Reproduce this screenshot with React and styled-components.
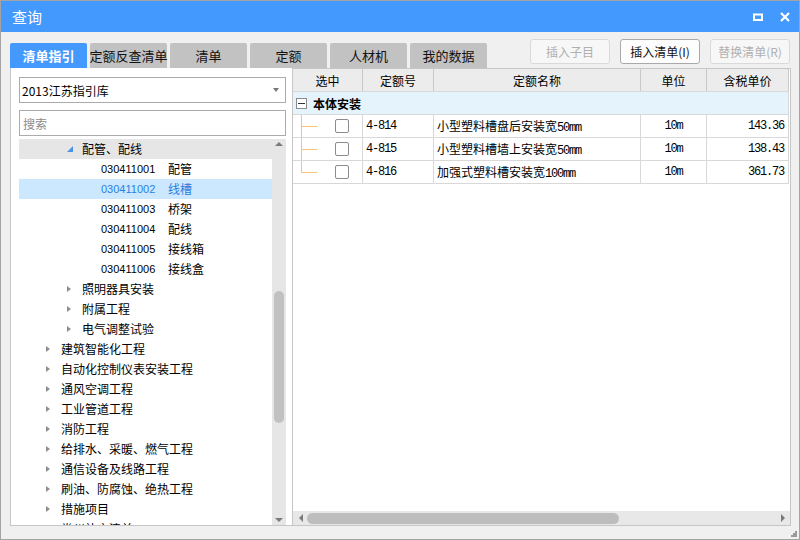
import React from "react";
import styled, { createGlobalStyle } from "styled-components";

const GlobalStyle = createGlobalStyle`
  html, body {
    margin: 0;
    padding: 0;
    background: #ffffff;
  }
  body {
    font-family: "Noto Sans CJK SC", "Liberation Sans", sans-serif;
    font-size: 12px;
    color: #000;
  }
  * {
    box-sizing: border-box;
  }
`;

const Window = styled.div`
  position: relative;
  width: 800px;
  height: 540px;
  background: #f0f0f0;
  border: 1px solid #a4a4a4;
  display: flex;
  flex-direction: column;
  overflow: hidden;
`;

const TitleBar = styled.div`
  height: 31px;
  background: #4499ff;
  display: flex;
  align-items: center;
  padding: 0 9px 0 11px;
  color: #fff;
`;

const Title = styled.span`
  font-size: 15px;
  flex: 1;
`;

const TitleIcons = styled.div`
  display: flex;
  align-items: center;
  gap: 17px;
`;

const Toolbar = styled.div`
  height: 36px;
  display: flex;
  padding: 0 9px 0 9px;
`;

const Tabs = styled.div`
  display: flex;
  align-self: flex-end;
  gap: 3px;
`;

const Tab = styled.div`
  width: 77px;
  height: 25px;
  display: flex;
  align-items: center;
  justify-content: center;
  border-radius: 2px 2px 0 0;
  font-size: 13px;
  background: ${(p) => (p.$active ? "#4499ff" : "#c2c2c2")};
  color: ${(p) => (p.$active ? "#fff" : "#111")};
  font-weight: ${(p) => (p.$active ? 700 : 400)};
  white-space: nowrap;
`;

const Actions = styled.div`
  margin-left: auto;
  margin-top: 7px;
  display: flex;
  gap: 10px;
  align-self: flex-start;
`;

const Button = styled.div`
  width: 80px;
  height: 25px;
  display: flex;
  align-items: center;
  justify-content: center;
  border-radius: 3px;
  font-size: 12px;
  background: ${(p) => (p.$disabled ? "#f7f7f7" : "#fdfdfd")};
  border: 1px solid ${(p) => (p.$disabled ? "#d9d9d9" : "#a9a9a9")};
  color: ${(p) => (p.$disabled ? "#b0b0b0" : "#111")};
`;

const Content = styled.div`
  height: 458px;
  display: flex;
  padding: 0 8px 0 9px;
`;

const LeftPanel = styled.div`
  width: 282px;
  background: #fff;
  border-left: 1px solid #c6c6c6;
  border-bottom: 1px solid #c6c6c6;
  padding: 9px 6px 0 8px;
  display: flex;
  flex-direction: column;
`;

const Select = styled.div`
  height: 26px;
  border: 1px solid #ababab;
  display: flex;
  align-items: center;
  justify-content: space-between;
  padding: 0 6px 0 2px;
  font-size: 12px;
`;

const Caret = styled.span`
  width: 0;
  height: 0;
  border-left: 3.5px solid transparent;
  border-right: 3.5px solid transparent;
  border-top: 4px solid #777;
`;

const Search = styled.input`
  margin-top: 7px;
  height: 26px;
  border: 1px solid #ababab;
  outline: none;
  padding: 0 3px;
  font-family: "Noto Sans CJK SC", "Liberation Sans", sans-serif;
  font-size: 12px;
  &::placeholder {
    color: #8c8c8c;
  }
`;

const Tree = styled.div`
  margin-top: 3px;
  flex: 1;
  display: flex;
  overflow: hidden;
`;

const TreeList = styled.div`
  flex: 1;
  overflow: hidden;
`;

const TreeRow = styled.div`
  height: 20px;
  display: flex;
  align-items: center;
  padding-left: ${(p) => p.$indent}px;
  padding-bottom: 1px;
  white-space: nowrap;
  background: ${(p) => (p.$head ? "#e6e6e6" : p.$selected ? "#cce8ff" : "transparent")};
  color: ${(p) => (p.$selected ? "#2a7fe0" : "#000")};
`;

const Toggle = styled.span`
  width: 15px;
  display: flex;
  align-items: center;
`;

const OpenTri = styled.span`
  width: 0;
  height: 0;
  border-left: 6px solid transparent;
  border-bottom: 6px solid #4a92e8;
`;

const ClosedTri = styled.span`
  width: 0;
  height: 0;
  border-top: 3px solid transparent;
  border-bottom: 3px solid transparent;
  border-left: 4px solid #8e8e8e;
`;

const Code = styled.span`
  width: 67px;
  font-family: "Liberation Sans", sans-serif;
  font-size: 11px;
`;

const VScroll = styled.div`
  width: 14px;
  background: #e6e6e6;
  display: flex;
  flex-direction: column;
  align-items: center;
`;

const ArrowUp = styled.span`
  margin-top: 3px;
  width: 0;
  height: 0;
  border-left: 4px solid transparent;
  border-right: 4px solid transparent;
  border-bottom: 4px solid #7a7a7a;
`;

const ArrowDown = styled.span`
  margin: auto 0 3px;
  width: 0;
  height: 0;
  border-left: 4px solid transparent;
  border-right: 4px solid transparent;
  border-top: 4px solid #7a7a7a;
`;

const VThumb = styled.span`
  margin-top: 145px;
  width: 10px;
  height: 132px;
  border-radius: 5px;
  background: #c1c1c1;
`;

const RightPanel = styled.div`
  width: 499px;
  background: #fff;
  border: 1px solid #c6c6c6;
  display: flex;
  flex-direction: column;
`;

const Row = styled.div`
  display: grid;
  grid-template-columns: 70px 71px 207px 66px 82px;
  width: 496px;
  height: 23px;
  border-bottom: 1px solid #d8d8d8;
  background: ${(p) => (p.$header ? "#ececec" : "#fff")};
`;

const Cell = styled.div`
  position: relative;
  display: flex;
  align-items: center;
  justify-content: ${(p) => p.$align || "flex-start"};
  padding: 0 ${(p) => (p.$align === "flex-end" ? "4px" : "0")} 0 ${(p) => (p.$align ? "0" : "3px")};
  border-right: 1px solid ${(p) => (p.$header ? "#c9c9c9" : "#d8d8d8")};
  font-size: 12px;
  white-space: nowrap;
  overflow: hidden;
`;

const Num = styled.span`
  font-family: "Liberation Mono", monospace;
  font-size: 12px;
  letter-spacing: -1.2px;
`;

const GroupRow = styled.div`
  width: 496px;
  height: 23px;
  display: flex;
  align-items: center;
  gap: 6px;
  padding-left: 3px;
  background: #e5f3fd;
  border-right: 1px solid #d8d8d8;
  border-bottom: 1px solid #d8d8d8;
  font-weight: 700;
  font-size: 12px;
`;

const MinusBox = styled.span`
  width: 11px;
  height: 11px;
  border: 1px solid #8a8a8a;
  background: #fff;
  display: flex;
  align-items: center;
  justify-content: center;
  &::after {
    content: "";
    width: 7px;
    height: 1px;
    background: #333;
  }
`;

const SelectCell = styled(Cell)`
  padding-left: 42px;
  &::before {
    content: "";
    position: absolute;
    left: 8px;
    top: 0;
    width: 1px;
    height: ${(p) => (p.$last ? "12px" : "23px")};
    background: #f7c470;
  }
  &::after {
    content: "";
    position: absolute;
    left: 8px;
    top: 11px;
    width: 16px;
    height: 1px;
    background: #f7c470;
  }
`;

const Check = styled.span`
  width: 14px;
  height: 14px;
  border: 1px solid #8c8c8c;
  border-radius: 2px;
  background: #fff;
`;

const Filler = styled.div`
  flex: 1;
`;

const HScroll = styled.div`
  height: 14px;
  background: #e8e8e8;
  display: flex;
  align-items: center;
  padding: 0 5px 0 6px;
`;

const ArrowLeft = styled.span`
  width: 0;
  height: 0;
  border-top: 4px solid transparent;
  border-bottom: 4px solid transparent;
  border-right: 4px solid #7a7a7a;
`;

const ArrowRight = styled.span`
  margin-left: auto;
  width: 0;
  height: 0;
  border-top: 4px solid transparent;
  border-bottom: 4px solid transparent;
  border-left: 4px solid #7a7a7a;
`;

const HThumb = styled.span`
  margin-left: 4px;
  width: 312px;
  height: 11px;
  border-radius: 6px;
  background: #bdbdbd;
`;

const Grip = styled.svg`
  position: absolute;
  right: 2px;
  bottom: 2px;
`;

const tree = [
  { indent: 48, open: true, label: "配管、配线", head: true },
  { indent: 82, code: "030411001", label: "配管" },
  { indent: 82, code: "030411002", label: "线槽", selected: true },
  { indent: 82, code: "030411003", label: "桥架" },
  { indent: 82, code: "030411004", label: "配线" },
  { indent: 82, code: "030411005", label: "接线箱" },
  { indent: 82, code: "030411006", label: "接线盒" },
  { indent: 48, label: "照明器具安装" },
  { indent: 48, label: "附属工程" },
  { indent: 48, label: "电气调整试验" },
  { indent: 27, label: "建筑智能化工程" },
  { indent: 27, label: "自动化控制仪表安装工程" },
  { indent: 27, label: "通风空调工程" },
  { indent: 27, label: "工业管道工程" },
  { indent: 27, label: "消防工程" },
  { indent: 27, label: "给排水、采暖、燃气工程" },
  { indent: 27, label: "通信设备及线路工程" },
  { indent: 27, label: "刷油、防腐蚀、绝热工程" },
  { indent: 27, label: "措施项目" },
  { indent: 27, label: "常州补充清单" },
];

const rows = [
  { no: "4-814", name: "小型塑料槽盘后安装宽", size: "50mm", unit: "10m", price: "143.36" },
  { no: "4-815", name: "小型塑料槽墙上安装宽", size: "50mm", unit: "10m", price: "138.43" },
  { no: "4-816", name: "加强式塑料槽安装宽", size: "100mm", unit: "10m", price: "361.73" },
];

const tabs = ["清单指引", "定额反查清单", "清单", "定额", "人材机", "我的数据"];

export default function App() {
  return (
    <>
      <GlobalStyle />
      <Window>
        <TitleBar>
          <Title>查询</Title>
          <TitleIcons>
            <svg width="10" height="8" viewBox="0 0 10 8">
              <rect x="1" y="1.5" width="8" height="5.5" fill="none" stroke="#fff" strokeWidth="2" />
            </svg>
            <svg width="10" height="10" viewBox="0 0 10 10">
              <path d="M1 1 L9 9 M9 1 L1 9" stroke="#fff" strokeWidth="2.2" />
            </svg>
          </TitleIcons>
        </TitleBar>

        <Toolbar>
          <Tabs>
            {tabs.map((t, i) => (
              <Tab key={t} $active={i === 0}>
                {t}
              </Tab>
            ))}
          </Tabs>
          <Actions>
            <Button $disabled>插入子目</Button>
            <Button>插入清单(I)</Button>
            <Button $disabled>替换清单(R)</Button>
          </Actions>
        </Toolbar>

        <Content>
          <LeftPanel>
            <Select>
              <span>2013江苏指引库</span>
              <Caret />
            </Select>
            <Search placeholder="搜索" />
            <Tree>
              <TreeList>
                {tree.map((n, i) => (
                  <TreeRow key={i} $indent={n.indent} $head={n.head} $selected={n.selected}>
                    {n.code ? (
                      <>
                        <Code>{n.code}</Code>
                        <span>{n.label}</span>
                      </>
                    ) : (
                      <>
                        <Toggle>{n.open ? <OpenTri /> : <ClosedTri />}</Toggle>
                        <span>{n.label}</span>
                      </>
                    )}
                  </TreeRow>
                ))}
              </TreeList>
              <VScroll>
                <ArrowUp />
                <VThumb />
                <ArrowDown />
              </VScroll>
            </Tree>
          </LeftPanel>

          <RightPanel>
            <Row $header>
              <Cell $header $align="center">选中</Cell>
              <Cell $header $align="center">定额号</Cell>
              <Cell $header $align="center">定额名称</Cell>
              <Cell $header $align="center">单位</Cell>
              <Cell $header $align="center">含税单价</Cell>
            </Row>
            <GroupRow>
              <MinusBox />
              <span>本体安装</span>
            </GroupRow>
            {rows.map((r, i) => (
              <Row key={r.no}>
                <SelectCell $last={i === rows.length - 1}>
                  <Check />
                </SelectCell>
                <Cell>
                  <Num>{r.no}</Num>
                </Cell>
                <Cell>
                  <span>
                    {r.name}
                    <Num>{r.size}</Num>
                  </span>
                </Cell>
                <Cell $align="center">
                  <Num>{r.unit}</Num>
                </Cell>
                <Cell $align="flex-end">
                  <Num>{r.price}</Num>
                </Cell>
              </Row>
            ))}
            <Filler />
            <HScroll>
              <ArrowLeft />
              <HThumb />
              <ArrowRight />
            </HScroll>
          </RightPanel>
        </Content>

        <Grip width="6" height="6" viewBox="0 0 6 6">
          <rect x="4" y="0" width="2" height="2" fill="#9a9a9a" />
          <rect x="2" y="2" width="2" height="2" fill="#9a9a9a" />
          <rect x="4" y="2" width="2" height="2" fill="#9a9a9a" />
          <rect x="0" y="4" width="2" height="2" fill="#9a9a9a" />
          <rect x="2" y="4" width="2" height="2" fill="#9a9a9a" />
          <rect x="4" y="4" width="2" height="2" fill="#9a9a9a" />
        </Grip>
      </Window>
    </>
  );
}
